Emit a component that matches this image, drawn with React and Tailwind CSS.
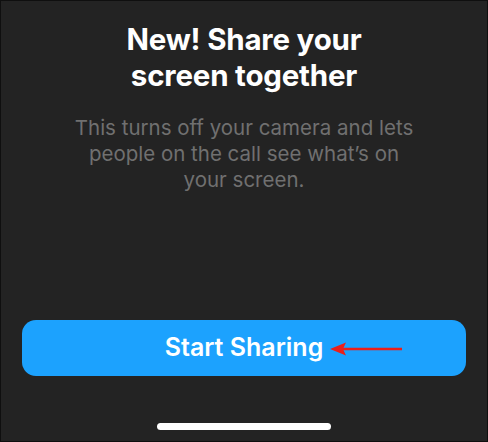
export default function App() {
  return (
    <div
      className="w-[488px] h-[442px] bg-[#232323] border border-[#0f0f0f] flex flex-col items-center text-center"
      style={{ fontFamily: "Inter, 'Liberation Sans', sans-serif" }}
    >
      <h1 className="mt-[20px] text-[29.5px] leading-[36px] font-bold text-white tracking-[-0.2px]">
        New! Share your
        <br />
        screen together
      </h1>
      <p className="mt-[22px] text-[20.5px] leading-[26px] text-[#707070]">
        This turns off your camera and lets
        <br />
        people on the call see what’s on
        <br />
        your screen.
      </p>
      <div className="flex-1" />
      <div className="w-full px-[21px]">
        <button className="relative w-full h-[56px] rounded-[14px] bg-[#1ca2fe] text-white text-[25px] font-semibold flex items-center justify-center">
          Start Sharing
          <svg
            className="absolute left-[308px] top-[21px]"
            width="74"
            height="16"
            viewBox="0 0 74 16"
          >
            <line x1="12" y1="8" x2="72" y2="8" stroke="#ec1f1a" strokeWidth="2.5" />
            <polygon points="0,8 16,1.5 13,8 16,14.5" fill="#ec1f1a" />
          </svg>
        </button>
      </div>
      <div className="mt-[47px] mb-[11px] w-[174px] h-[7px] rounded-full bg-white" />
    </div>
  );
}
